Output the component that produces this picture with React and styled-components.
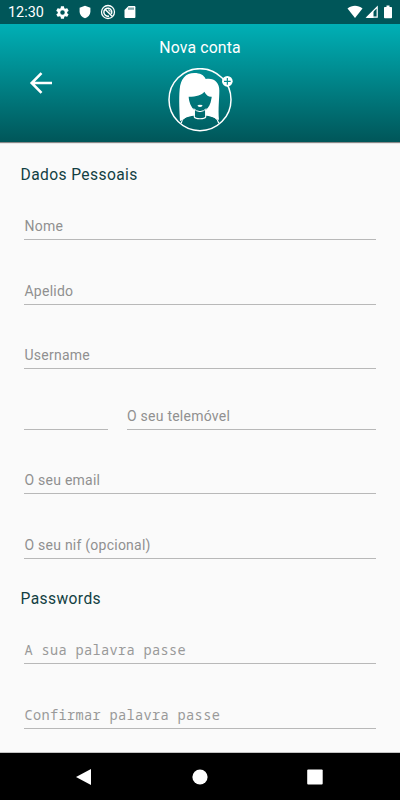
import React from "react";
import styled, { createGlobalStyle } from "styled-components";

const Global = createGlobalStyle`
  * { box-sizing: border-box; }
  body { margin: 0; background: #fafafa; font-family: Roboto, sans-serif; }
`;

const Screen = styled.div`
  width: 400px;
  height: 800px;
  display: flex;
  flex-direction: column;
  background: #fafafa;
  overflow: hidden;
`;

const StatusBar = styled.div`
  height: 24px;
  flex: none;
  display: flex;
  align-items: center;
  padding: 0 5px 0 8px;
  background: #005659;
  color: #fff;
`;

const Clock = styled.span`
  width: 47px;
  font-size: 14.4px;
  line-height: 22px;
  padding-top: 2px;
`;

const StatusIcons = styled.div`
  display: flex;
  align-items: center;
  gap: ${(p) => p.$gap}px;
  margin-left: ${(p) => (p.$end ? "auto" : "0")};
  svg { display: block; }
`;

const Header = styled.header`
  height: 118px;
  flex: none;
  display: grid;
  grid-template-columns: 80px 1fr 80px;
  background: linear-gradient(#00b0b6, #005659);
  box-shadow: 0 1px 1px rgba(0, 0, 0, 0.45);
`;

const BackButton = styled.button`
  border: 0;
  padding: 45px 0 0 26px;
  background: none;
  display: flex;
  align-items: flex-start;
`;

const HeaderCenter = styled.div`
  display: flex;
  flex-direction: column;
  align-items: center;
`;

const PageTitle = styled.h1`
  margin: 14px 0 0;
  font-size: 15.8px;
  line-height: 20px;
  font-weight: 400;
  letter-spacing: 0.15px;
  color: #fff;
`;

const Avatar = styled.svg`
  margin-top: 10px;
  display: block;
`;

const Form = styled.main`
  height: 611px;
  flex: none;
  padding: 23px 24px 0;
  border-bottom: 1px solid #c4c4c4;
`;

const SectionTitle = styled.h2`
  margin: 0 0 0 -3.5px;
  padding-top: ${(p) => p.$before || 0}px;
  font-size: 15.6px;
  line-height: 20px;
  font-weight: 400;
  letter-spacing: 0.4px;
  color: #123f43;
`;

const Field = styled.div`
  height: ${(p) => p.$height}px;
  flex: ${(p) => (p.$width ? `0 0 ${p.$width}px` : "1")};
  display: flex;
  align-items: flex-end;
  padding: 0 0 4px 0.5px;
  border-bottom: 1px solid #b8b8b8;
  font-family: ${(p) => (p.$mono ? '"Noto Sans Mono", "DejaVu Sans Mono", monospace' : "Roboto, sans-serif")};
  font-size: ${(p) => (p.$mono ? 13.6 : 14)}px;
  line-height: 18px;
  letter-spacing: ${(p) => (p.$mono ? 0.35 : 0.24)}px;
  font-weight: 400;
  color: ${(p) => (p.$mono ? "#999" : "#909090")};
  white-space: nowrap;
`;

const PhoneRow = styled.div`
  display: flex;
  gap: 18.5px;
`;

const NavBar = styled.nav`
  height: 47px;
  flex: none;
  display: flex;
  align-items: center;
  justify-content: space-between;
  padding: 0 77px 0 76px;
  background: #000;
  svg { display: block; }
`;

function NotificationIcons() {
  return (
    <StatusIcons $gap={8}>
      <svg width="15" height="15" viewBox="0 0 24 24" fill="#fff"><path d="M19.4 13c.1-.3.1-.7.1-1s0-.7-.1-1l2.1-1.600c.2-.2.2-.4.1-.6l-2-3.500c-.1-.2-.4-.3-.6-.2l-2.500 1c-.5-.4-1.100-.7-1.700-1l-.4-2.600c0-.2-.2-.4-.5-.4h-4c-.3 0-.5.2-.5.4L9 5.100c-.6.3-1.200.6-1.700 1l-2.500-1c-.2-.1-.5 0-.6.2l-2 3.500c-.1.200-.1.500.1.600L4.500 11a8 8 0 0 0 0 2l-2.200 1.600c-.2.2-.2.400-.1.600l2 3.500c.1.200.4.300.6.200l2.500-1c.5.400 1.100.700 1.700 1l.4 2.600c0 .2.200.4.500.4h4c.3 0 .5-.2.5-.4l.4-2.600c.6-.3 1.200-.6 1.700-1l2.500 1c.2.100.5 0 .6-.2l2-3.500c.1-.2.1-.5-.1-.6zM12 15.600A3.600 3.600 0 1 1 12 8.400a3.600 3.600 0 0 1 0 7.200z" /></svg>
      <svg width="14" height="14" viewBox="0 0 14 14" fill="#fff"><path d="M7 .8 12.400 2.800V6.800c0 3-2.200 5.300-5.400 6.500C3.800 12.100 1.600 9.800 1.600 6.800v-4z" /></svg>
      <svg width="16" height="16" viewBox="0 0 16 16" fill="none" stroke="#fff"><circle cx="8" cy="8" r="6.500" strokeWidth="1.300" /><path d="M11.400 10A4 4 0 1 0 9 12M5.500 5.700l6.700 6.500" strokeWidth="1.500" /><path d="M8 5.800a2.200 2.200 0 0 1 2.100 2.700" strokeWidth="1" /></svg>
      <svg width="12" height="14" viewBox="0 0 12 14"><path d="M4.500 1h5.700c.7 0 1.200.5 1.200 1.200v9.700c0 .7-.5 1.100-1.200 1.100H1.700c-.7 0-1.200-.4-1.200-1.100V5z" fill="#fff" /><path d="M5 2.500v2.300M7 2.500v2.300M9 2.500v2.300" stroke="#005659" strokeWidth="1" /></svg>
    </StatusIcons>
  );
}

function SystemIcons() {
  return (
    <StatusIcons $gap={2} $end>
      <svg width="16" height="14" viewBox="0 0 16 14"><path d="M.5 3.500C5-.1 11-.1 15.500 3.500L8 13z" fill="#fff" /></svg>
      <svg width="14" height="14" viewBox="0 0 14 14"><path d="M2 12.200 12.200 2v10.200z" fill="none" stroke="#fff" strokeWidth="1.200" /><path d="M1 13 8.500 5.500V13z" fill="#fff" /></svg>
      <svg width="14" height="14" viewBox="0 0 14 14"><path d="M5.500.5h3V2h1.700c.5 0 .8.300.8.800v9.700c0 .5-.3.800-.8.800H3.800c-.5 0-.8-.3-.8-.8V2.800c0-.5.300-.8.800-.8h1.700z" fill="#fff" /></svg>
    </StatusIcons>
  );
}

function NewAvatar() {
  return (
    <Avatar width="68" height="64" viewBox="3 12 204 192" fill="none">
      <circle cx="105" cy="107" r="93" stroke="#fff" strokeWidth="4.500" />
      <path d="M45 172C44 150 41 106 44 76C47 44 62 27 88 27C105 27 117 33 122 45C145 40 164 54 163 80C163 104 159 134 162 168C150 162 138 158 122 154L122 138C131 131 137 120 139 105C140 102 140 100 140 98C131 99 123 93 118 83C110 93 95 98 71 98C72 114 78 130 89 138V154C72 158 58 161 45 172Z" fill="#fff" />
      <path d="M88 138V159C91 166 119 166 122 159V138M49 177C53 158 66 154 88 152M122 152C145 153 157 160 161 177" stroke="#fff" strokeWidth="3.500" />
      <path d="M86 134Q94 142 105 143Q116 142 124 134" stroke="#fff" strokeWidth="3" />
      <path d="M97 125Q102 121 105 123Q109 121 113 125Q105 133 97 125Z" fill="#fff" />
      <circle cx="187" cy="52" r="16" fill="#fff" />
      <path d="M187 42V62M177 52H197" stroke="#008b90" strokeWidth="3.500" />
    </Avatar>
  );
}

export default function App() {
  return (
    <Screen>
      <Global />
      <StatusBar>
        <Clock>12:30</Clock>
        <NotificationIcons />
        <SystemIcons />
      </StatusBar>
      <Header>
        <BackButton aria-label="Voltar">
          <svg width="28" height="28" viewBox="0 0 28 28" fill="none" stroke="#fff" strokeWidth="2.600"><path d="M26 14H6M15.500 4.200 5.700 14l9.800 9.800" /></svg>
        </BackButton>
        <HeaderCenter>
          <PageTitle>Nova conta</PageTitle>
          <NewAvatar />
        </HeaderCenter>
      </Header>
      <Form>
        <SectionTitle>Dados Pessoais</SectionTitle>
        <Field $height={55}>Nome</Field>
        <Field $height={65}>Apelido</Field>
        <Field $height={64}>Username</Field>
        <PhoneRow>
          <Field $height={61} $width={84} />
          <Field $height={61}>O seu telemóvel</Field>
        </PhoneRow>
        <Field $height={64}>O seu email</Field>
        <Field $height={65}>O seu nif (opcional)</Field>
        <SectionTitle $before={30}>Passwords</SectionTitle>
        <Field $height={55} $mono>A sua palavra passe</Field>
        <Field $height={65} $mono>Confirmar palavra passe</Field>
      </Form>
      <NavBar>
        <svg width="16" height="18" viewBox="0 0 16 18"><path d="M15 1v16L0 9z" fill="#fff" /></svg>
        <svg width="16" height="16" viewBox="0 0 16 16"><circle cx="8" cy="8" r="7.600" fill="#fff" /></svg>
        <svg width="16" height="16" viewBox="0 0 16 16"><rect x=".2" y=".5" width="15.500" height="15" rx="1" fill="#fff" /></svg>
      </NavBar>
    </Screen>
  );
}
